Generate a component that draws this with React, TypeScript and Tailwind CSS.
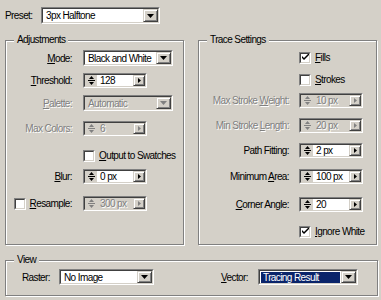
import type { ReactNode } from "react"

// classic 3d bevels
const sunkenOuter = "border border-t-[#808080] border-l-[#808080] border-b-white border-r-white"
const sunkenInner = "border border-t-[#404040] border-l-[#404040] border-b-[#d4d0c8] border-r-[#d4d0c8]"
const raised =
  "flex items-center justify-center bg-[#d4d0c8] border border-t-[#d4d0c8] border-l-[#d4d0c8] border-b-[#404040] border-r-[#404040] shadow-[inset_1px_1px_0_#fff,inset_-1px_-1px_0_#808080]"
const disabledText = "text-[#808080] [text-shadow:1px_1px_0_#fff]"

function DownArrow({ muted }: { muted?: boolean }) {
  return (
    <svg width="7" height="4" viewBox="0 0 7 4">
      <polygon points="0,0 7,0 3.5,4" fill={muted ? "#808080" : "#000"} />
    </svg>
  )
}

function RightArrow({ muted }: { muted?: boolean }) {
  return (
    <svg width="3" height="5" viewBox="0 0 3 5">
      <polygon points="0,0 3,2.5 0,5" fill={muted ? "#808080" : "#000"} />
    </svg>
  )
}

function Dropdown({
  value,
  className,
  disabled,
  selected,
}: {
  value: string
  className: string
  disabled?: boolean
  selected?: boolean
}) {
  return (
    <div className={`${sunkenOuter} ${className}`}>
      <div className={`${sunkenInner} flex h-full w-full ${disabled ? "bg-[#d4d0c8]" : "bg-white"}`}>
        <div className="flex flex-1 items-center pl-[1px] pr-[1px] overflow-hidden">
          <span
            className={`whitespace-nowrap leading-[11px] px-[2px] ${
              selected ? "bg-[#0a246a] text-white flex-1 h-[11px]" : disabled ? disabledText : ""
            }`}
          >
            {value}
          </span>
        </div>
        <div className={`${raised} w-[15px]`}>
          <DownArrow muted={disabled} />
        </div>
      </div>
    </div>
  )
}

function Spinner({ value, disabled }: { value: string; disabled?: boolean }) {
  const c = disabled ? "#808080" : "#000"
  return (
    <div className={`${sunkenOuter} w-[64px] h-[15px]`}>
      <div className={`${sunkenInner} flex h-full w-full ${disabled ? "bg-[#d4d0c8]" : "bg-white"}`}>
        <div className="w-[12px] bg-[#d4d0c8] flex items-center justify-center">
          <svg width="9" height="11" viewBox="0 0 9 11">
            <polygon points="4.5,1 7,4 2,4" fill={c} />
            <rect x="1" y="5" width="7" height="1" fill={c} />
            <polygon points="2,7 7,7 4.5,10" fill={c} />
          </svg>
        </div>
        <div className={`flex-1 flex items-center pl-[3px] leading-[11px] ${disabled ? disabledText : ""}`}>
          {value}
        </div>
        <div className={`${raised} w-[12px]`}>
          <RightArrow muted={disabled} />
        </div>
      </div>
    </div>
  )
}

function Checkbox({ checked }: { checked?: boolean }) {
  return (
    <div className={`${sunkenOuter} w-[12px] h-[12px] shrink-0`}>
      <div className={`${sunkenInner} h-full w-full bg-white flex items-center justify-center`}>
        {checked && (
          <svg width="7" height="7" viewBox="0 0 7 7">
            <path d="M0 2 L0 4 L2 6 L7 1 L7 -1 L2 4 Z" fill="#000" />
          </svg>
        )}
      </div>
    </div>
  )
}

function Frame({ title, className, children }: { title: string; className: string; children: ReactNode }) {
  return (
    <div className={`relative border border-[#808080] shadow-[inset_1px_1px_0_#fff,1px_1px_0_#fff] ${className}`}>
      <span className="absolute -top-[7px] left-[8px] px-[3px] bg-[#d4d0c8] leading-[12px]">{title}</span>
      {children}
    </div>
  )
}

function Row({ h, label, labelW, gap, children }: { h: string; label: ReactNode; labelW: string; gap: string; children: ReactNode }) {
  return (
    <div className={h}>
      <div className={`flex items-center ${gap}`}>
        <div className={`${labelW} flex justify-end items-center gap-[4px] whitespace-nowrap`}>{label}</div>
        {children}
      </div>
    </div>
  )
}

function L({ k, rest, disabled }: { k: string; rest: string; disabled?: boolean }) {
  return (
    <span className={disabled ? disabledText : ""}>
      <u>{k}</u>
      {rest}
    </span>
  )
}

export default function App() {
  return (
    <div className="w-[381px] h-[300px] bg-[#d4d0c8] text-black text-[10px] tracking-[-0.6px] font-['Liberation_Sans',Arial,sans-serif] overflow-hidden">
      {/* Preset */}
      <div className="flex items-center pt-[7px] pl-[5px] h-[24px]">
        <span className="w-[36px]">Preset:</span>
        <Dropdown value="3px Halftone" className="w-[119px] h-[17px]" />
      </div>

      <div className="flex pl-[5px] gap-[14px] mt-[16px]">
        {/* Adjustments */}
        <Frame title="Adjustments" className="w-[179px] h-[205px] pt-[9px]">
          <Row h="h-[23px]" labelW="w-[66px]" gap="gap-[11px]" label={<L k="M" rest="ode:" />}>
            <Dropdown value="Black and White" className="w-[90px] h-[16px]" />
          </Row>
          <Row h="h-[22px]" labelW="w-[66px]" gap="gap-[11px]" label={<L k="T" rest="hreshold:" />}>
            <Spinner value="128" />
          </Row>
          <Row h="h-[26px]" labelW="w-[66px]" gap="gap-[11px]" label={<L k="P" rest="alette:" disabled />}>
            <Dropdown value="Automatic" className="w-[90px] h-[16px]" disabled />
          </Row>
          <Row h="h-[27px]" labelW="w-[66px]" gap="gap-[11px]" label={<L k="" rest="Max Colors:" disabled />}>
            <Spinner value="6" disabled />
          </Row>
          <div className="h-[21px] flex items-start pl-[77px]">
            <div className="flex items-center gap-[4px]">
              <Checkbox />
              <L k="O" rest="utput to Swatches" />
            </div>
          </div>
          <Row h="h-[27px]" labelW="w-[66px]" gap="gap-[11px]" label={<L k="B" rest="lur:" />}>
            <Spinner value="0 px" />
          </Row>
          <Row
            h="h-[15px]"
            labelW="w-[66px]"
            gap="gap-[11px]"
            label={
              <>
                <Checkbox />
                <L k="R" rest="esample:" />
              </>
            }
          >
            <Spinner value="300 px" disabled />
          </Row>
        </Frame>

        {/* Trace Settings */}
        <Frame title="Trace Settings" className="w-[179px] h-[205px] pt-[9px]">
          <div className="h-[22px] pl-[100px] flex items-start">
            <div className="flex items-center gap-[4px]">
              <Checkbox checked />
              <L k="F" rest="ills" />
            </div>
          </div>
          <div className="h-[21px] pl-[100px] flex items-start">
            <div className="flex items-center gap-[4px]">
              <Checkbox />
              <L k="S" rest="trokes" />
            </div>
          </div>
          <Row h="h-[25px]" labelW="w-[90px]" gap="gap-[10px]" label={<span className={disabledText}>Max Stroke <u>W</u>eight:</span>}>
            <Spinner value="10 px" disabled />
          </Row>
          <Row h="h-[25px]" labelW="w-[90px]" gap="gap-[10px]" label={<span className={disabledText}>Min Stroke <u>L</u>ength:</span>}>
            <Spinner value="20 px" disabled />
          </Row>
          <Row h="h-[26px]" labelW="w-[90px]" gap="gap-[10px]" label={<span>Path Fitting:</span>}>
            <Spinner value="2 px" />
          </Row>
          <Row h="h-[28px]" labelW="w-[90px]" gap="gap-[10px]" label={<span>Minimum <u>A</u>rea:</span>}>
            <Spinner value="100 px" />
          </Row>
          <Row h="h-[27px]" labelW="w-[90px]" gap="gap-[10px]" label={<L k="C" rest="orner Angle:" />}>
            <Spinner value="20" />
          </Row>
          <div className="h-[12px] pl-[100px] flex items-start">
            <div className="flex items-center gap-[4px]">
              <Checkbox checked />
              <L k="I" rest="gnore White" />
            </div>
          </div>
        </Frame>
      </div>

      {/* View */}
      <Frame title="View" className="ml-[5px] mt-[15px] w-[373px] h-[36px] pt-[8px]">
        <div className="flex items-center">
          <div className="w-[44px] text-right">Raster:</div>
          <Dropdown value="No Image" className="ml-[9px] w-[95px] h-[16px]" />
          <div className="w-[94px] text-right">
            <u>V</u>ector:
          </div>
          <Dropdown value="Tracing Result" selected className="ml-[10px] w-[100px] h-[16px]" />
        </div>
      </Frame>
    </div>
  )
}
